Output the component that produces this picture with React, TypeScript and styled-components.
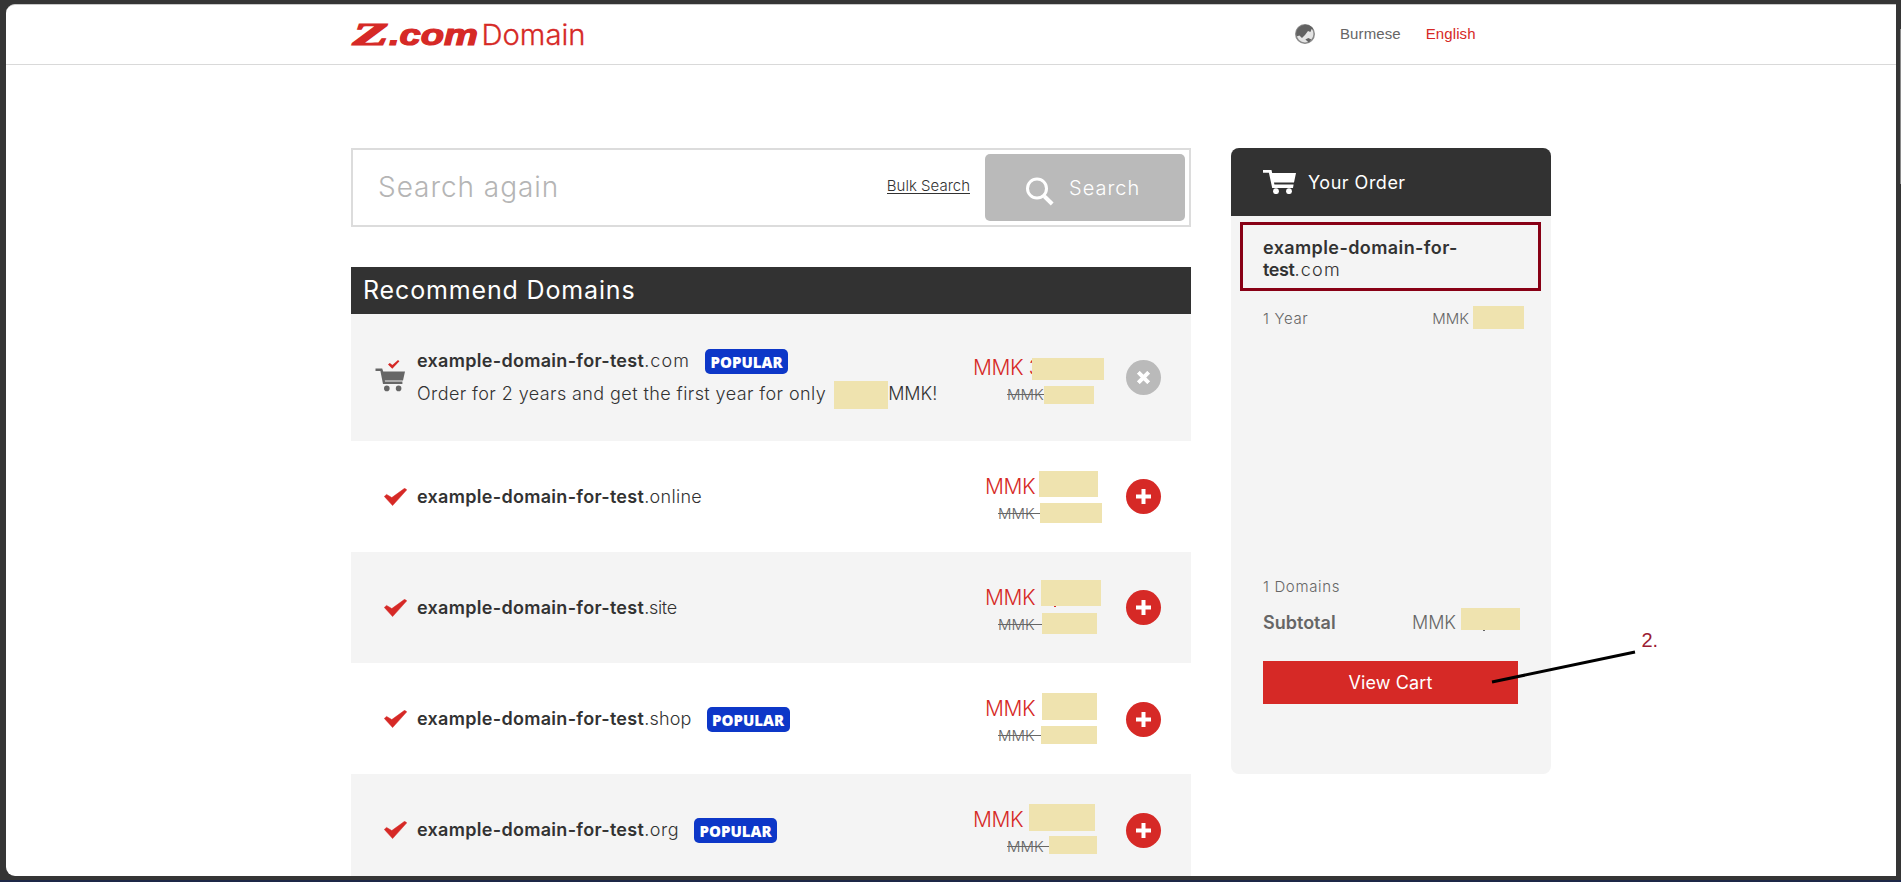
import React from "react";
import styled, { createGlobalStyle } from "styled-components";

const RED = "#d62926";
const DARK = "#323232";
const GREY = "#666";
const MASK = "#efe3af";

const GlobalStyle = createGlobalStyle`
  * { box-sizing: border-box; }
  body {
    margin: 0;
    overflow: hidden;
    font-family: Inter, "Open Sans", sans-serif;
    font-weight: 300;
    color: ${DARK};
  }
`;

const Desktop = styled.div`
  position: relative;
  height: 882px;
  padding: 4px 5px 0 6px;
  background: #353535;
  border-bottom: 2px solid #1d2747;
  overflow: hidden;
`;

const ScrollThumb = styled.div`
  position: absolute;
  right: 0;
  top: 29px;
  width: 1px;
  height: 155px;
  background: #8a8a8a;
`;

const Page = styled.div`
  position: relative;
  height: 872px;
  background: #fff;
  border-top: 1px solid #c8c8c8;
  border-radius: 9px 0 0 9px;
  overflow: hidden;
`;

const Header = styled.header`
  display: flex;
  align-items: flex-start;
  height: 60px;
  padding-left: 344px;
  border-bottom: 1px solid #d9d9d9;
`;

const Logo = styled.svg`
  display: block;
  width: 240px;
  height: 48px;
  fill: ${RED};
`;

const Languages = styled.nav`
  display: flex;
  align-items: center;
  margin: 18px 0 0 705px;
  height: 22px;
  font: 400 15px/22px "Liberation Sans", Arial, sans-serif;
  letter-spacing: 0.1px;
  color: ${GREY};
`;

const Language = styled.span<{ $active?: boolean }>`
  margin-left: 25px;
  color: ${(p) => (p.$active ? RED : GREY)};
`;

const Columns = styled.main`
  display: flex;
  align-items: flex-start;
  gap: 40px;
  padding: 83px 0 0 345px;
`;

const Results = styled.section`
  width: 840px;
`;

const SearchBox = styled.div`
  display: flex;
  align-items: center;
  height: 79px;
  padding: 0 4px 0 25px;
  border: 2px solid #dcdcdc;
`;

const Placeholder = styled.span`
  flex: 1;
  font-size: 28px;
  letter-spacing: 0.95px;
  line-height: 40px;
  margin-bottom: 2px;
  color: #b5b5b5;
`;

const BulkLink = styled.span`
  height: 17px;
  margin: 0 15px 4px 0;
  border-bottom: 1px solid ${DARK};
  font-size: 15px;
  line-height: 18px;
`;

const SearchButton = styled.div`
  display: flex;
  align-items: center;
  gap: 14px;
  width: 200px;
  height: 67px;
  padding-left: 40px;
  border-radius: 5px;
  background: #bababa;
  color: #fff;
  font-size: 20px;
  letter-spacing: 1px;

  svg {
    margin-top: 7px;
  }
`;

const Heading = styled.h2`
  margin: 40px 0 0;
  height: 47px;
  padding-left: 12px;
  background: ${DARK};
  color: #fff;
  font-size: 25px;
  line-height: 46px;
  font-weight: 400;
  letter-spacing: 0.85px;
`;

const Row = styled.div<{ $shaded?: boolean; $tall?: boolean }>`
  display: grid;
  grid-template-columns: 66px 553px 156px 35px;
  align-items: center;
  height: ${(p) => (p.$tall ? 127 : 111)}px;
  background: ${(p) => (p.$shaded ? "#f4f4f4" : "#fff")};
`;

const StateIcon = styled.div<{ $cart?: boolean }>`
  display: flex;
  padding: ${(p) => (p.$cart ? "0 0 4px 24px" : "0 0 0 33px")};
`;

const Offer = styled.div`
  padding-bottom: 2px;
`;

const Name = styled.div`
  display: flex;
  align-items: center;
  height: 33px;
  font-size: 18px;
  line-height: 33px;
  white-space: pre;

  b {
    font-weight: 600;
    letter-spacing: 0.3px;
  }
`;

const Extension = styled.span<{ $spacing: number }>`
  letter-spacing: ${(p) => p.$spacing}px;
`;

const Popular = styled.span`
  width: 83px;
  height: 25px;
  margin: 2px 0 0 15px;
  border-radius: 5px;
  background: #0d37c8;
  color: #fff;
  font: 800 15px/26px "Open Sans", sans-serif;
  text-align: center;
`;

const Promo = styled.div`
  position: relative;
  display: flex;
  height: 33px;
  font-size: 18px;
  line-height: 33px;
  letter-spacing: 0.41px;
  white-space: nowrap;
`;

const PromoCurrency = styled.span`
  margin-left: 62px;
  letter-spacing: 0;
`;

const Prices = styled.div`
  padding-top: 7px;
`;

const Price = styled.div<{ $indent: number }>`
  position: relative;
  height: 27px;
  padding-left: ${(p) => p.$indent}px;
  font-size: 21px;
  line-height: 28px;
  letter-spacing: -0.4px;
  color: ${RED};
`;

const OldPrice = styled.div<{ $indent: number; $strike: number }>`
  position: relative;
  height: 27px;
  padding-left: ${(p) => p.$indent}px;
  font-size: 15px;
  line-height: 28px;
  color: ${GREY};

  &::before {
    content: "";
    position: absolute;
    left: ${(p) => p.$indent}px;
    top: 13px;
    width: ${(p) => p.$strike}px;
    height: 1px;
    background: ${GREY};
  }
`;

/* Hides an amount; laid over the end of the line it belongs to. */
const Redaction = styled.span<{ $x: number; $y: number; $w: number; $h: number }>`
  position: absolute;
  left: ${(p) => p.$x}px;
  top: ${(p) => p.$y}px;
  width: ${(p) => p.$w}px;
  height: ${(p) => p.$h}px;
  background: ${MASK};
`;

const Comma = styled.span<{ $x: number; $y: number; $color: string }>`
  position: absolute;
  left: ${(p) => p.$x}px;
  top: ${(p) => p.$y}px;
  width: 2px;
  height: 1px;
  background: ${(p) => p.$color};
`;

const RoundButton = styled.div<{ $grey?: boolean; $low?: boolean }>`
  display: flex;
  align-items: center;
  justify-content: center;
  width: 35px;
  height: 35px;
  margin-top: ${(p) => (p.$low ? 2 : 0)}px;
  border-radius: 50%;
  background: ${(p) => (p.$grey ? "#bababa" : RED)};

  svg {
    transform: rotate(${(p) => (p.$grey ? 45 : 0)}deg);
  }
`;

const Order = styled.aside`
  width: 320px;
  height: 626px;
  border-radius: 8px;
  background: #f4f4f4;
  overflow: hidden;
`;

const OrderHead = styled.div`
  display: flex;
  align-items: center;
  gap: 12px;
  height: 68px;
  padding-left: 32px;
  background: ${DARK};
  color: #fff;
  font-size: 18px;
  font-weight: 400;
  letter-spacing: 0.5px;
`;

const OrderItem = styled.div`
  width: 301px;
  height: 69px;
  margin: 6px 0 0 9px;
  padding: 12px 0 0 20px;
  border: 3px solid #880015;
  font-size: 18px;
  line-height: 22px;
  letter-spacing: 1.2px;

  b {
    font-weight: 600;
    letter-spacing: 0.4px;
  }

  b.tail {
    letter-spacing: -0.4px;
  }
`;

const OrderLine = styled.div<{ $top: number; $size: number }>`
  position: relative;
  display: flex;
  justify-content: space-between;
  height: 24px;
  margin-top: ${(p) => p.$top}px;
  padding: 0 82px 0 32px;
  font-size: ${(p) => p.$size}px;
  line-height: 24px;
  color: ${GREY};

  b {
    font-weight: 600;
  }
`;

const Spaced = styled.span`
  letter-spacing: 0.65px;
`;

const SubtotalAmount = styled.span`
  margin-right: 13px;
`;

const ViewCart = styled.div`
  width: 255px;
  height: 43px;
  margin: 26px 0 0 32px;
  background: ${RED};
  color: #fff;
  font-size: 18px;
  font-weight: 400;
  line-height: 43px;
  letter-spacing: 0.1px;
  text-align: center;
`;

const Annotation = styled.svg`
  position: absolute;
  left: 1480px;
  top: 620px;
  width: 190px;
  height: 75px;
`;

const Tick = () => (
  <svg width="23" height="18" viewBox="0 0 23 18" fill={RED}>
    <path d="M0.3 8.4 L2.6 6.4 L7.8 9.6 L20.6 0.3 L22.8 1.8 L8.6 17.6 Z" stroke={RED} strokeWidth="0.5" strokeLinejoin="round" />
  </svg>
);

const Cart = ({ color }: { color: string }) => (
  <svg width="33" height="24" viewBox="0 0 33 24" fill={color}>
    <path d="M0 0 H8.5 L9.2 3 H33 L31 12.6 H11 L11.4 14.4 H30.6 L30 18 H9.2 L5.9 2.8 H0 Z" />
    <circle cx="13" cy="21.2" r="2.9" />
    <circle cx="26" cy="21.2" r="2.9" />
  </svg>
);

const CartWithTick = () => (
  <svg width="31" height="32" viewBox="0 0 31 32">
    <path
      d="M0.5 8.6 H7.2 L8.2 11.4 H30 L28 20.4 H9.8 L10 21.6 H27.4 V24 H8 L5.4 11 H0.5 Z"
      fill={GREY}
    />
    <circle cx="11.8" cy="28.4" r="2.8" fill={GREY} />
    <circle cx="23.6" cy="28.4" r="2.8" fill={GREY} />
    <path d="M13 4.4 L14.8 3 L17.4 5 L23 0 L24.4 1.2 L17.3 8.8 Z" fill={RED} />
  </svg>
);

const Magnifier = () => (
  <svg width="30" height="29" viewBox="0 0 30 29" fill="none" stroke="#fff">
    <circle cx="12" cy="11.5" r="9.5" strokeWidth="3" />
    <path d="M19.3 19.3 L27.2 27" strokeWidth="4" />
  </svg>
);

const Globe = () => (
  <svg width="20" height="20" viewBox="0 0 20 20">
    <circle cx="10" cy="10" r="9.2" fill="#e4e4e4" stroke="#8b8b8b" strokeWidth="1.6" />
    <path
      d="M1.2 8 Q3 1.5 10 0.8 Q16.5 1 18.6 5.4 L16.6 5 L15.4 8 L13 7 L10 11 L7 14 L4.4 11.4 L1.6 12.4 Q0.8 10.4 1.2 8 Z"
      fill="#626262"
    />
    <path d="M10.4 15.4 L13.4 14 L16.4 15.4 L13.8 18.4 Z" fill="#626262" />
  </svg>
);

const Plus = () => (
  <svg width="15" height="15" viewBox="0 0 15 15" stroke="#fff" strokeWidth="4">
    <path d="M7.5 0 V15 M0 7.5 H15" />
  </svg>
);

type Mask = [number, number, number, number];

type Domain = {
  ext: string;
  spacing: number;
  popular?: boolean;
  indent: number;
  oldIndent: number;
  strike: number;
  mask: Mask;
  oldMask: Mask;
  low?: boolean;
  comma?: boolean;
};

const domains: Domain[] = [
  { ext: ".online", spacing: 0.3, indent: 15, oldIndent: 28, strike: 42, mask: [69, -2, 59, 26], oldMask: [70, 3, 62, 20] },
  { ext: ".site", spacing: -0.3, indent: 15, oldIndent: 28, strike: 44, mask: [71, -4, 60, 26], oldMask: [72, 2, 55, 21], comma: true },
  { ext: ".shop", spacing: 0.2, popular: true, indent: 15, oldIndent: 28, strike: 43, mask: [72, -2, 55, 27], oldMask: [71, 4, 56, 18], low: true },
  { ext: ".org", spacing: 0.55, popular: true, indent: 3, oldIndent: 37, strike: 42, mask: [59, -2, 66, 27], oldMask: [79, 3, 48, 18], low: true },
];

const Cover = ({ area }: { area: Mask }) => (
  <Redaction $x={area[0]} $y={area[1]} $w={area[2]} $h={area[3]} />
);

export default function App() {
  return (
    <>
      <GlobalStyle />
      <Desktop>
        <Page>
          <Header>
            <Logo viewBox="0 0 240 48">
              <text x="2.500" y="40" fontFamily="Liberation Serif" fontWeight="700" fontStyle="italic" fontSize="31" stroke={RED} strokeWidth="1.2" textLength="36" lengthAdjust="spacingAndGlyphs">Z</text>
              <text x="39" y="40" fontFamily="Liberation Sans" fontWeight="700" fontStyle="italic" fontSize="30" stroke={RED} strokeWidth="1.2" textLength="89" lengthAdjust="spacingAndGlyphs">.com</text>
              <text x="131.500" y="40" fontFamily="Inter" fontWeight="300" fontSize="28" stroke={RED} strokeWidth="0.3" textLength="104" lengthAdjust="spacingAndGlyphs">Domain</text>
            </Logo>
            <Languages>
              <Globe />
              <Language>Burmese</Language>
              <Language $active>English</Language>
            </Languages>
          </Header>
          <Columns>
            <Results>
              <SearchBox>
                <Placeholder>Search again</Placeholder>
                <BulkLink>Bulk Search</BulkLink>
                <SearchButton>
                  <Magnifier />
                  Search
                </SearchButton>
              </SearchBox>
              <Heading>Recommend Domains</Heading>
              <Row $shaded $tall>
                <StateIcon $cart>
                  <CartWithTick />
                </StateIcon>
                <Offer>
                  <Name>
                    <b>example-domain-for-test</b>
                    <Extension $spacing={1.1}>.com</Extension>
                    <Popular>POPULAR</Popular>
                  </Name>
                  <Promo>
                    Order for 2 years and get the first year for only
                    <PromoCurrency>MMK!</PromoCurrency>
                    <Cover area={[417, 4, 54, 28]} />
                  </Promo>
                </Offer>
                <Prices>
                  <Price $indent={3}>
                    MMK 3
                    <Cover area={[62, 4, 72, 22]} />
                  </Price>
                  <OldPrice $indent={37} $strike={37}>
                    MMK
                    <Cover area={[74, 5, 50, 18]} />
                  </OldPrice>
                </Prices>
                <RoundButton $grey>
                  <Plus />
                </RoundButton>
              </Row>
              {domains.map((d, i) => (
                <Row key={d.ext} $shaded={i % 2 === 1}>
                  <StateIcon>
                    <Tick />
                  </StateIcon>
                  <Name>
                    <b>example-domain-for-test</b>
                    <Extension $spacing={d.spacing}>{d.ext}</Extension>
                    {d.popular && <Popular>POPULAR</Popular>}
                  </Name>
                  <Prices>
                    <Price $indent={d.indent}>
                      MMK
                      <Cover area={d.mask} />
                      {d.comma && <Comma $x={84} $y={22} $color={RED} />}
                    </Price>
                    <OldPrice $indent={d.oldIndent} $strike={d.strike}>
                      MMK
                      <Cover area={d.oldMask} />
                    </OldPrice>
                  </Prices>
                  <RoundButton $low={d.low}>
                    <Plus />
                  </RoundButton>
                </Row>
              ))}
            </Results>
            <Order>
              <OrderHead>
                <Cart color="#fff" />
                Your Order
              </OrderHead>
              <OrderItem>
                <b>example-domain-for-</b>
                <br />
                <b className="tail">test</b>.com
              </OrderItem>
              <OrderLine $top={16} $size={15}>
                <Spaced>1 Year</Spaced>
                <span>MMK</span>
                <Cover area={[242, -1, 51, 23]} />
              </OrderLine>
              <OrderLine $top={244} $size={15}>
                <Spaced>1 Domains</Spaced>
              </OrderLine>
              <OrderLine $top={12} $size={18}>
                <b>Subtotal</b>
                <SubtotalAmount>MMK</SubtotalAmount>
                <Cover area={[230, -3, 59, 22]} />
                <Comma $x={252} $y={19} $color={GREY} />
              </OrderLine>
              <ViewCart>View Cart</ViewCart>
            </Order>
          </Columns>
        </Page>
        <ScrollThumb />
        <Annotation viewBox="0 0 190 75">
          <path d="M12 62 L155 32" stroke="#000" strokeWidth="3" />
          <text x="161.500" y="27" fontFamily="Liberation Sans" fontWeight="400" fontSize="20" fill="#9b1c33">2.</text>
        </Annotation>
      </Desktop>
    </>
  );
}
